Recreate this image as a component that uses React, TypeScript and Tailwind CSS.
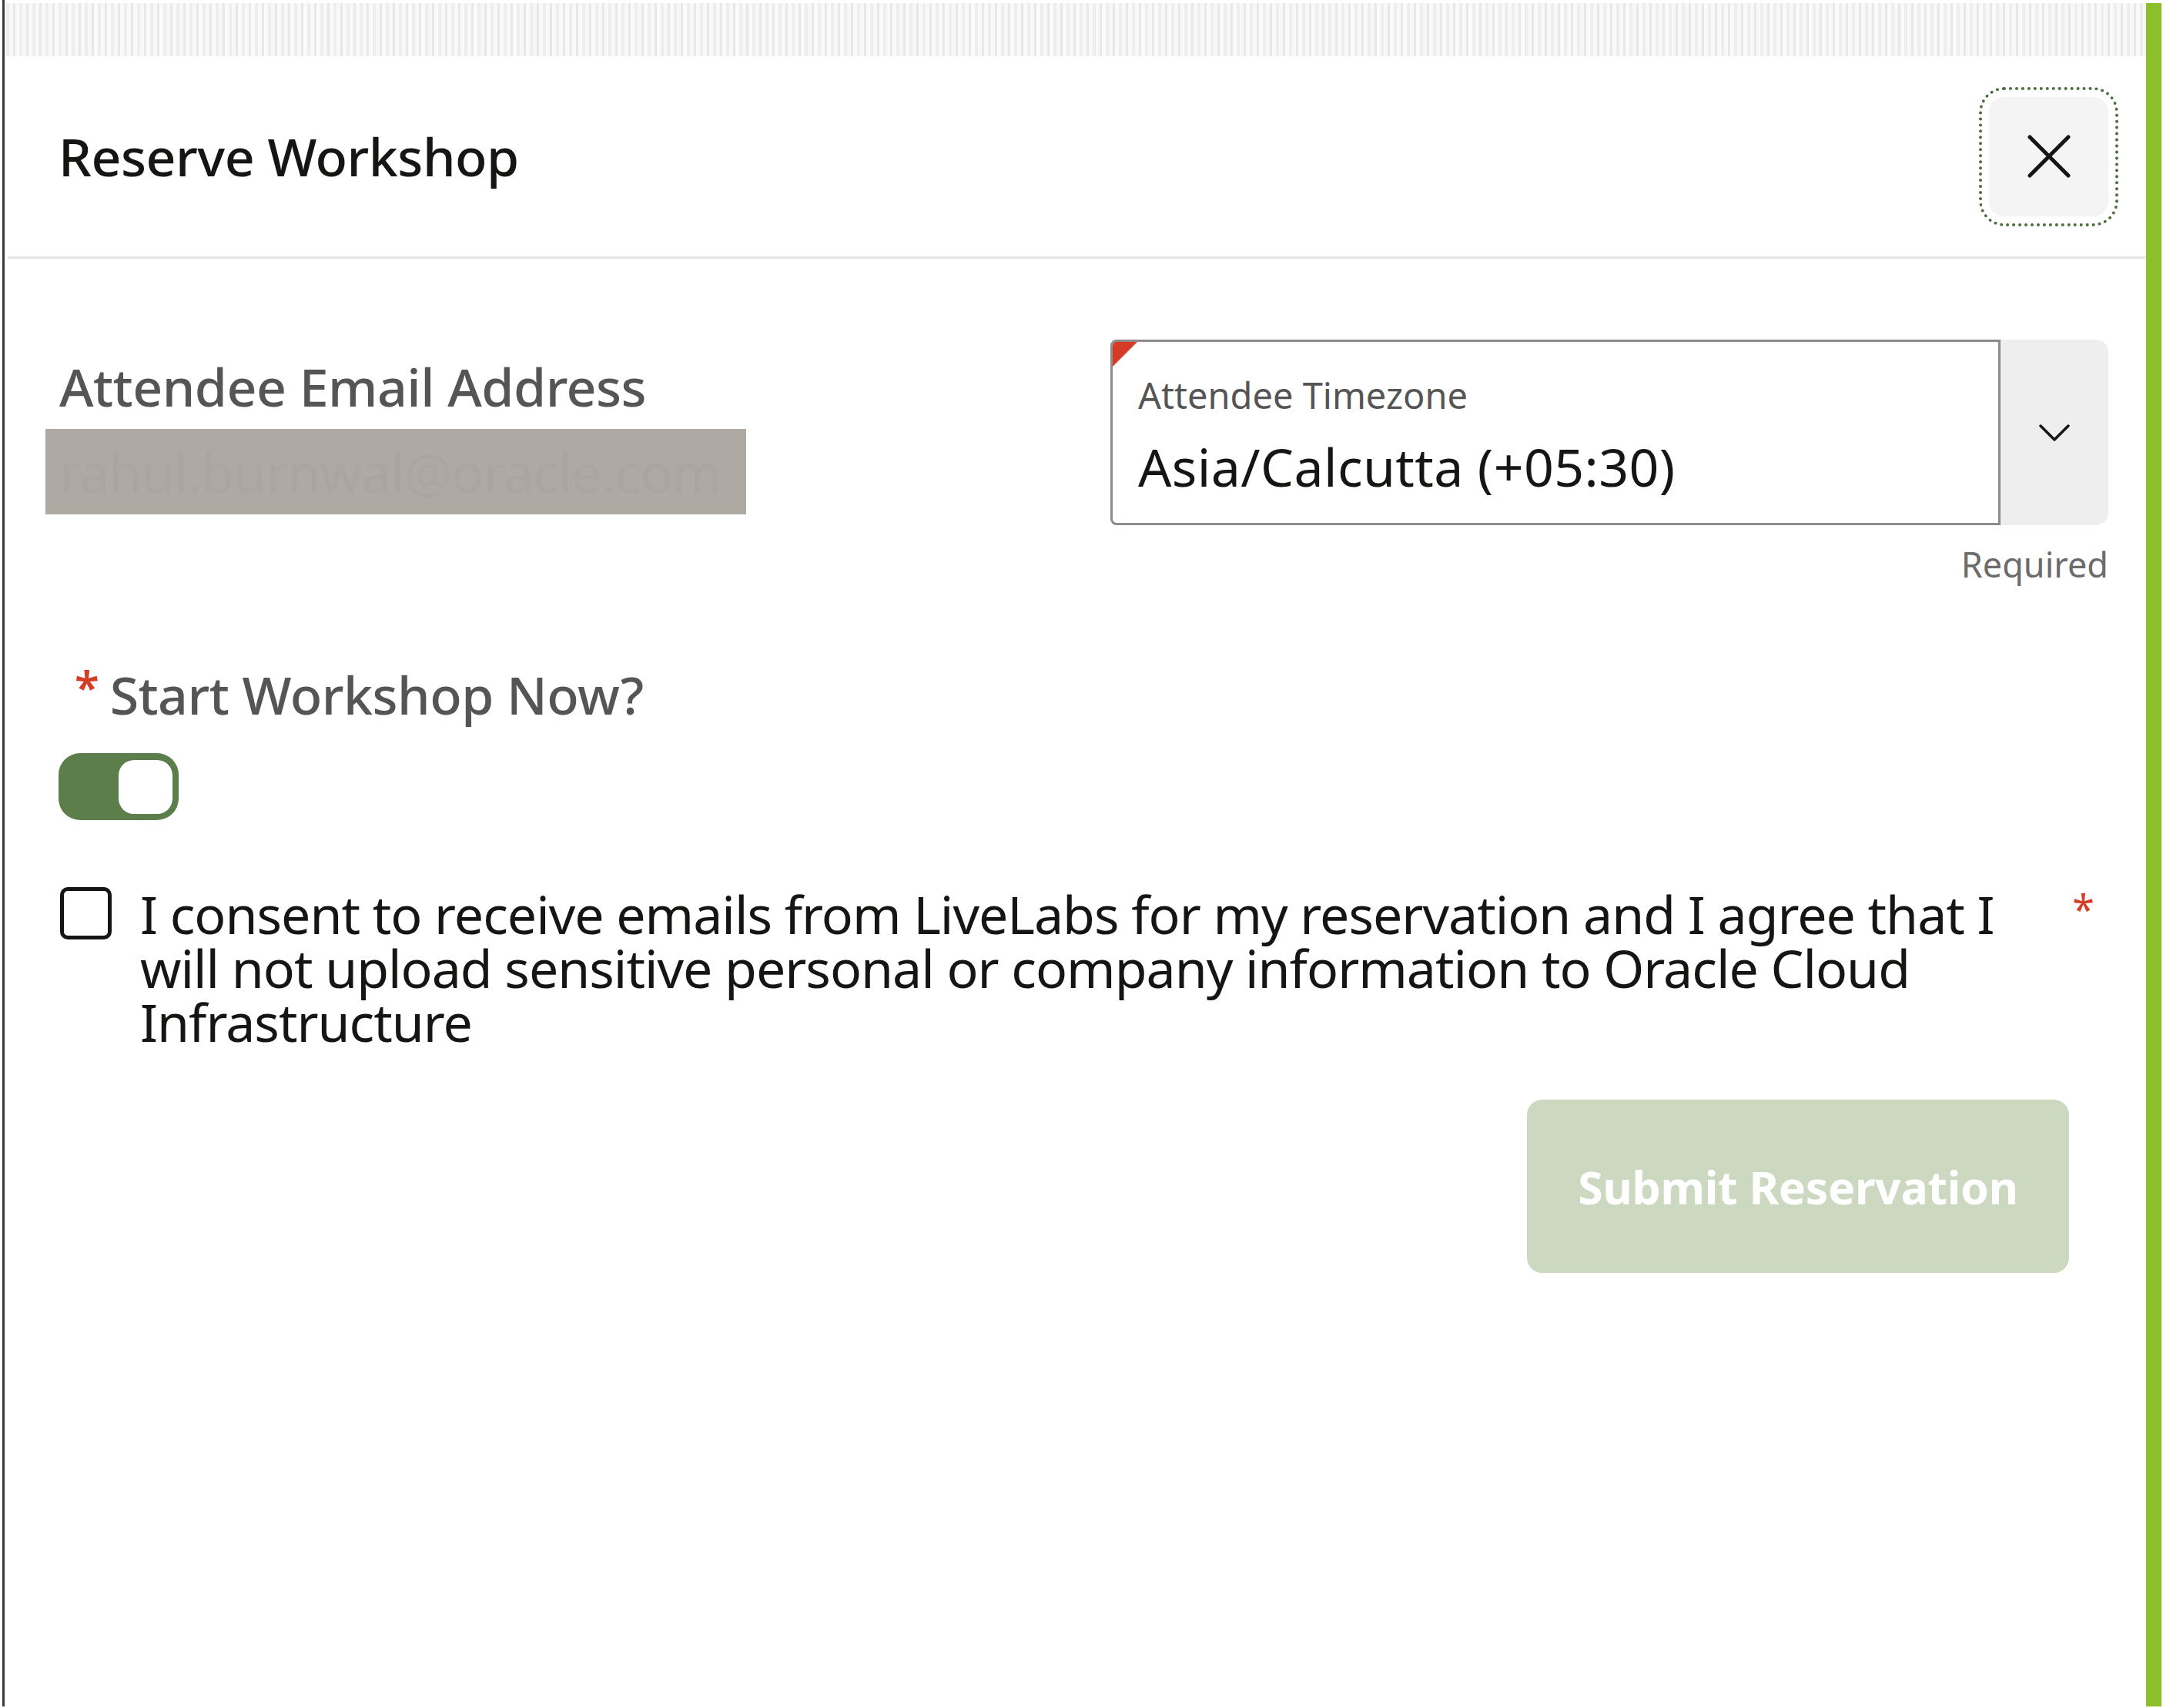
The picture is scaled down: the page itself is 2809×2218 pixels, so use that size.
export default function App() {
  return (
    <div className="w-[2809px] h-[2218px] bg-white flex pl-[3px] font-['Noto_Sans',sans-serif] overflow-hidden">
      <div className="w-[3px] h-[2216px] bg-[#3a3a3a] shrink-0" />
      <div className="w-[2781px] shrink-0 flex flex-col">
        <div className="ml-[2px] mt-[4px] h-[69px] bg-[repeating-linear-gradient(90deg,#eeeeee_0px,#eeeeee_4px,#f8f8f8_4px,#f8f8f8_9px,#e8e8e8_9px,#e8e8e8_12px,#fafafa_12px,#fafafa_17px)]" />
        <div className="h-[260px] flex items-center justify-between pl-[70px] pr-[49px]">
          <h1 className="text-[68px] font-medium tracking-[-0.5px] text-[#161513] leading-[92px]">Reserve Workshop</h1>
          <button className="w-[155px] h-[155px] rounded-[20px] bg-[#f4f4f4] outline-dotted outline-[4px] outline-[#4a6e3b] outline-offset-[9px] flex items-center justify-center">
            <svg width="56" height="56" viewBox="0 0 56 56" fill="none" stroke="#161513" strokeWidth="5" strokeLinecap="round">
              <path d="M3 3 L53 53 M53 3 L3 53" />
            </svg>
          </button>
        </div>
        <div className="h-[3px] ml-[4px] bg-[#e6e6e6]" />
        <div className="flex flex-col pl-[53px] pr-[49px] pt-[105px]">
          <div className="flex justify-between items-start">
            <div className="flex flex-col">
              <div className="mt-[15px] ml-[18px] text-[68px] font-medium tracking-[-0.5px] leading-[92px] text-[#555555]">Attendee Email Address</div>
              <div className="mt-[9px] w-[910px] h-[111px] bg-[#aea9a3] flex items-center pl-[18px] overflow-hidden">
                <span className="text-[69px] tracking-[-0.5px] leading-[92px] text-[#aaa59f] whitespace-nowrap">rahul.burnwal@oracle.com</span>
              </div>
            </div>
            <div className="flex flex-col w-[1296px]">
              <div className="flex h-[241px]">
                <div className="relative w-[1156px] h-[241px] border-[3px] border-[#8c8c8c] rounded-l-[8px] bg-white flex flex-col pl-[33px] pt-[37px] overflow-hidden">
                  <div className="absolute left-0 top-0 w-0 h-0 border-t-[32px] border-r-[32px] border-t-[#d63b25] border-r-transparent" />
                  <div className="text-[47px] leading-[64px] text-[#555555]">Attendee Timezone</div>
                  <div className="mt-[15px] text-[68px] tracking-[0.4px] leading-[92px] text-[#161513] whitespace-nowrap">Asia/Calcutta (+05:30)</div>
                </div>
                <div className="w-[140px] h-[241px] bg-[#eeeeee] rounded-r-[16px] flex items-center justify-center">
                  <svg width="40" height="24" viewBox="0 0 40 24" fill="none" stroke="#161513" strokeWidth="3.5" strokeLinecap="round" strokeLinejoin="round">
                    <path d="M2 3 L20 21 L38 3" />
                  </svg>
                </div>
              </div>
              <div className="mt-[21px] text-right text-[45px] leading-[60px] text-[#6b6b6b]">Required</div>
            </div>
          </div>

          <div className="mt-[93px] ml-[38px] flex items-start">
            <span className="text-[58px] font-semibold leading-[60px] text-[#d63b25] mt-[6px] mr-[14px]">*</span>
            <span className="text-[68px] font-medium tracking-[-0.5px] leading-[92px] text-[#555555]">Start Workshop Now?</span>
          </div>

          <div className="mt-[30px] ml-[17px] w-[156px] h-[87px] rounded-[28px] bg-[#5c7e4b] flex items-center justify-end pr-[8px]">
            <div className="w-[70px] h-[70px] rounded-[20px] bg-white" />
          </div>

          <div className="mt-[87px] flex items-start">
            <div className="ml-[19px] w-[67px] h-[68px] border-[5px] border-[#161513] rounded-[10px] shrink-0" />
            <div className="ml-[37px] text-[68px] tracking-[-1px] leading-[70px] text-[#161513] flex-1">
              <div className="whitespace-nowrap">I consent to receive emails from LiveLabs for my reservation and I agree that I</div>
              <div className="whitespace-nowrap">will not upload sensitive personal or company information to Oracle Cloud</div>
              <div className="whitespace-nowrap">Infrastructure</div>
            </div>
            <span className="text-[52px] leading-[52px] text-[#d63b25] mt-[2px] mr-[18px]">*</span>
          </div>

          <div className="mt-[66px] flex justify-end pr-[51px]">
            <button className="w-[704px] h-[225px] rounded-[20px] bg-[#ccd9c0] text-white text-[59px] font-bold tracking-[-0.3px] leading-[80px]">Submit Reservation</button>
          </div>
        </div>
      </div>
      <div className="w-[20px] mt-[4px] h-[2212px] bg-[#8cbf2a] shrink-0" />
    </div>
  );
}
